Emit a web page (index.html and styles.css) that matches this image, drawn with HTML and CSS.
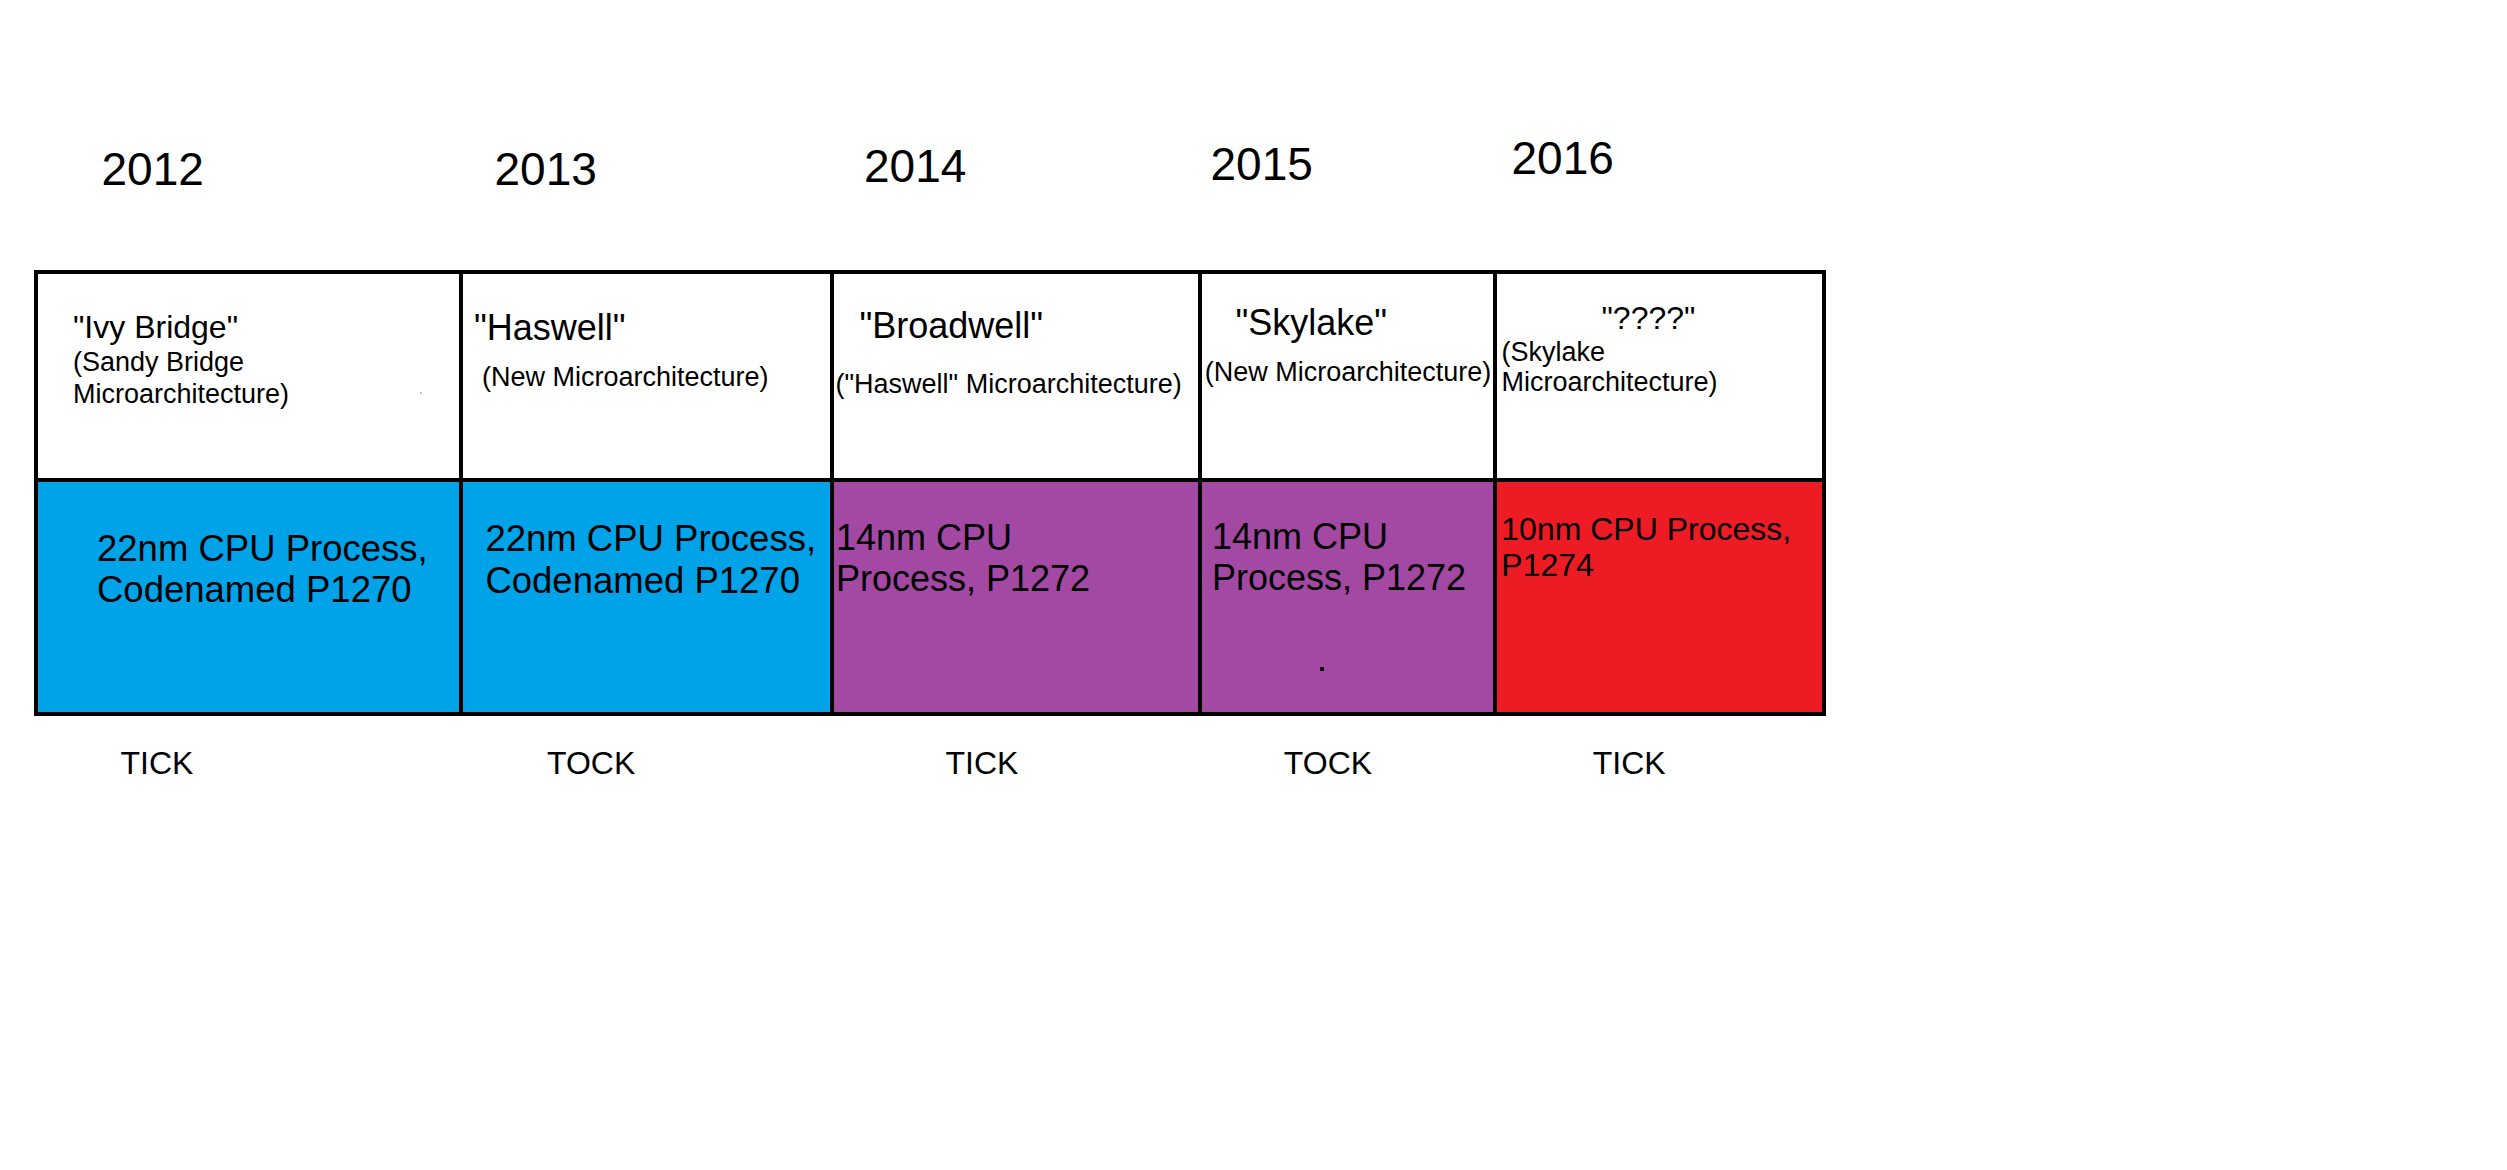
FILE: index.html
```html
<!DOCTYPE html>
<html lang="en">
<head>
<meta charset="utf-8">
<title>Intel Tick-Tock 2012-2016</title>
<link rel="stylesheet" href="styles.css">
</head>
<body>
<div class="page">
  <div class="strip years">
    <div class="year year--1">2012</div>
    <div class="year year--2">2013</div>
    <div class="year year--3">2014</div>
    <div class="year year--4">2015</div>
    <div class="year year--5">2016</div>
  </div>

  <div class="chart">
    <div class="cell head head--1">
      <div class="title">"Ivy Bridge"</div>
      <div class="sub">(Sandy Bridge<br>Microarchitecture)</div>
      <span class="speck speck--grey"></span>
    </div>
    <div class="cell head head--2">
      <div class="title">"Haswell"</div>
      <div class="sub">(New Microarchitecture)</div>
    </div>
    <div class="cell head head--3">
      <div class="title">"Broadwell"</div>
      <div class="sub">("Haswell" Microarchitecture)</div>
    </div>
    <div class="cell head head--4">
      <div class="title">"Skylake"</div>
      <div class="sub">(New Microarchitecture)</div>
    </div>
    <div class="cell head head--5">
      <div class="title">"????"</div>
      <div class="sub">(Skylake<br>Microarchitecture)</div>
    </div>

    <div class="cell proc proc--1 cell--blue">
      <div class="ptext">22nm CPU Process,<br>Codenamed P1270</div>
    </div>
    <div class="cell proc proc--2 cell--blue">
      <div class="ptext">22nm CPU Process,<br>Codenamed P1270</div>
    </div>
    <div class="cell proc proc--3 cell--purple">
      <div class="ptext">14nm CPU<br>Process, P1272</div>
    </div>
    <div class="cell proc proc--4 cell--purple">
      <div class="ptext">14nm CPU<br>Process, P1272</div>
      <span class="speck speck--black"></span>
    </div>
    <div class="cell proc proc--5 cell--red">
      <div class="ptext">10nm CPU Process,<br>P1274</div>
    </div>
  </div>

  <div class="strip ticks">
    <div class="tick tick--1">TICK</div>
    <div class="tick tick--2">TOCK</div>
    <div class="tick tick--3">TICK</div>
    <div class="tick tick--4">TOCK</div>
    <div class="tick tick--5">TICK</div>
  </div>
</div>
</body>
</html>
```

FILE: styles.css
```css
html, body {
  margin: 0;
  padding: 0;
  background: #ffffff;
}

body {
  font-family: "Liberation Sans", Arial, sans-serif;
  color: #000000;
}

.page {
  box-sizing: border-box;
  width: 2507px;
  height: 1170px;
  padding: 134px 0 0 34px;
}

/* rows that share the chart's column grid */
.strip {
  display: grid;
  grid-template-columns: 421px 367px 364px 291px 325px;
  column-gap: 4px;
  padding: 0 4px;
  width: max-content;
  align-items: start;
}

.years {
  height: 136px;
}

.year {
  font-size: 46px;
  line-height: 46px;
  white-space: nowrap;
}

.year--1 { margin: 12px 0 0 63.5px; }
.year--2 { margin: 12px 0 0 31.5px; }
.year--3 { margin: 9px 0 0 30px; }
.year--4 { margin: 7px 0 0 8.5px; }
.year--5 { margin: 1px 0 0 14.5px; }

/* chart */
.chart {
  display: grid;
  grid-template-columns: 421px 367px 364px 291px 325px;
  grid-template-rows: 204px 230px;
  gap: 4px;
  padding: 4px;
  background: #000000;
  width: max-content;
}

.cell {
  background: #ffffff;
  position: relative;
  white-space: nowrap;
  overflow: hidden;
}

.cell--blue { background: #00a2e8; }
.cell--purple { background: #a349a4; }
.cell--red { background: #ed1c24; }

.title {
  font-size: 36px;
  line-height: 36px;
}

.sub {
  font-size: 27px;
  line-height: 31px;
}

.head--1 .title { font-size: 32px; line-height: 32px; margin: 37px 0 0 35px; }
.head--1 .sub { line-height: 32px; margin: 2.5px 0 0 35px; }

.head--2 .title { margin: 36px 0 0 11px; }
.head--2 .sub { margin: 16px 0 0 19px; }

.head--3 .title { margin: 34px 0 0 25.5px; }
.head--3 .sub { margin: 24.5px 0 0 1.5px; }

.head--4 .title { margin: 30.5px 0 0 33.5px; }
.head--4 .sub { margin: 16.3px 0 0 2.8px; }

.head--5 .title { font-size: 32px; line-height: 32px; margin: 28px 0 0 104.5px; }
.head--5 .sub { line-height: 30px; margin: 3.4px 0 0 4.5px; }

.ptext {
  font-size: 36px;
  line-height: 41px;
}

.proc--1 .ptext { font-size: 36.5px; margin: 45.5px 0 0 59px; }
.proc--2 .ptext { font-size: 36.5px; line-height: 42px; margin: 36.4px 0 0 22.4px; }
.proc--3 .ptext { margin: 35px 0 0 2px; }
.proc--4 .ptext { line-height: 41.3px; margin: 33.7px 0 0 10px; }
.proc--5 .ptext { font-size: 32px; line-height: 36.7px; margin: 28.6px 0 0 4.3px; }

/* stray paint specks */
.speck {
  position: absolute;
  display: block;
}

.speck--grey {
  left: 382px;
  top: 118px;
  width: 2px;
  height: 2px;
  background: #b8c4cc;
}

.speck--black {
  left: 118px;
  top: 185px;
  width: 4px;
  height: 4px;
  border-radius: 1px;
  background: #000000;
}

/* tick / tock labels */
.ticks {
  margin-top: 31px;
}

.tick {
  font-size: 32px;
  line-height: 32px;
  white-space: nowrap;
}

.tick--1 { margin-left: 82.5px; }
.tick--2 { margin-left: 84px; }
.tick--3 { margin-left: 111.5px; }
.tick--4 { margin-left: 81.8px; }
.tick--5 { margin-left: 95.8px; }
```
